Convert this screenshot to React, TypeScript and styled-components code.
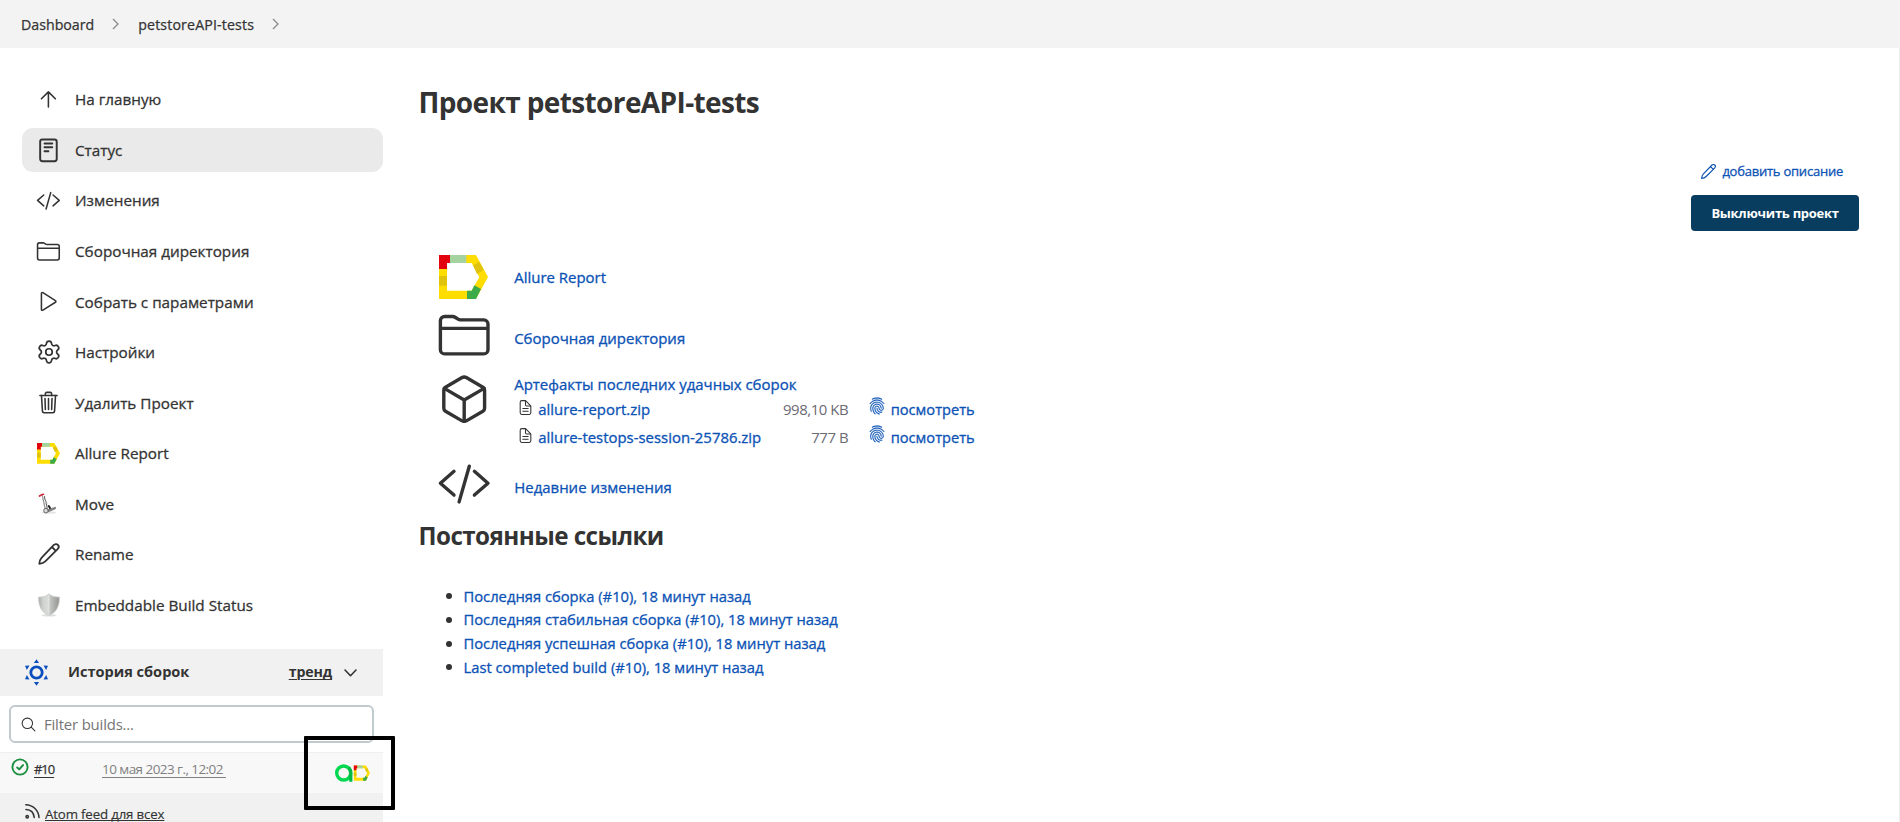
import React from 'react';
import styled, { createGlobalStyle } from 'styled-components';
import { Settings } from 'lucide-react';
import {
  IoTrashOutline,
  IoFingerPrintOutline,
  IoDocumentTextOutline,
  IoSearchOutline,
} from 'react-icons/io5';

const INK = '#333333';
const LINK = '#0b52b5';

const GlobalStyle = createGlobalStyle`
  * { box-sizing: border-box; }
  body {
    margin: 0;
    background: #fff;
    color: ${INK};
    font-family: "Open Sans", "Noto Sans", sans-serif;
  }
  svg { display: block; flex: none; overflow: visible; }
  a { color: inherit; text-decoration: none; white-space: nowrap; }
`;

const Page = styled.div`
  height: 822px;
  overflow: hidden;
  display: flex;
  flex-direction: column;
`;

const Breadcrumbs = styled.nav`
  height: 48px;
  flex: none;
  display: flex;
  align-items: center;
  padding-left: 21px;
  background: #f3f3f3;
  font-size: 14.2px;
  -webkit-text-stroke: 0.25px ${INK};
`;

const Crumb = styled.a<{ $track?: number }>`
  letter-spacing: ${(p) => p.$track ?? 0}px;
  padding-top: 1px;
`;

const CrumbArrow = styled.svg`
  width: 7px;
  height: 12px;
  margin: 0 19px 0 18px;
  stroke: #8a8a8a;
  fill: none;
`;

const Columns = styled.div`
  flex: 1;
  min-height: 0;
  display: flex;
`;

const Sidebar = styled.aside`
  position: relative;
  width: 383px;
  flex: none;
`;

const Tasks = styled.ul`
  list-style: none;
  margin: 0;
  padding: 29.4px 0 0 22px;
  display: flex;
  flex-direction: column;
  gap: 6.55px;
`;

const Task = styled.li<{ $active?: boolean }>`
  height: 44px;
  display: flex;
  align-items: center;
  gap: 14px;
  padding-left: 14px;
  border-radius: 11px;
  background: ${(p) => (p.$active ? '#eaeaea' : 'transparent')};
  font-size: 15.28px;
  line-height: 20px;
  -webkit-text-stroke: 0.28px ${INK};
`;

const TaskIcon = styled.span`
  width: 25px;
  height: 25px;
  display: flex;
  align-items: center;
  justify-content: center;
`;

const History = styled.section`
  margin-top: 22.6px;
`;

const HistoryHead = styled.header`
  height: 47px;
  display: flex;
  align-items: center;
  padding: 0 26px 0 23px;
  background: #f1f1f1;
  font-weight: 700;
`;

const HistoryTitle = styled.span`
  flex: 1;
  margin-left: 18px;
  font-size: 14.55px;
  padding-bottom: 3px;
`;

const TrendLink = styled.a`
  margin-right: 12px;
  padding-bottom: 2px;
  font-size: 14.2px;
  letter-spacing: -0.15px;
  text-decoration: underline;
  text-underline-offset: 2px;
  text-decoration-thickness: 1px;
`;

const FilterBox = styled.div`
  height: 38px;
  margin: 9px 9px;
  display: flex;
  align-items: center;
  gap: 7px;
  padding-left: 9px;
  border: 2px solid #c0cacf;
  border-radius: 6px;
  background: #fff;
  color: #757575;
  font-size: 14.9px;
  letter-spacing: -0.17px;
  svg { color: ${INK}; }
`;

const BuildRow = styled.div`
  height: 41px;
  display: flex;
  align-items: flex-start;
  padding: 6px 13px 0 11px;
  border-top: 1px solid #efefef;
  background: #f8f8f8;
`;

const BuildNumber = styled.a`
  width: 68px;
  margin-left: 5px;
  font-size: 13px;
  line-height: 20px;
  letter-spacing: -1.05px;
  text-decoration: underline;
  text-underline-offset: 3px;
  -webkit-text-stroke: 0.25px ${INK};
`;

const BuildDate = styled.a`
  flex: 1;
  white-space: pre;
  color: #808080;
  font-size: 13.5px;
  line-height: 20px;
  letter-spacing: -0.55px;
  text-decoration: underline;
  text-underline-offset: 3px;
`;

const TestOpsSlot = styled.span`
  padding-top: 5px;
`;

const FeedRow = styled.div`
  height: 30px;
  display: flex;
  gap: 4px;
  padding: 11px 0 0 24px;
  background: #f1f1f1;
  font-size: 13.3px;
  line-height: 18px;
  letter-spacing: -0.17px;
  -webkit-text-stroke: 0.15px ${INK};
`;

const FeedLink = styled.a`
  height: 18px;
  padding-top: 1px;
  text-decoration: underline;
  text-decoration-thickness: 1px;
  text-underline-offset: 1px;
  text-decoration-skip-ink: none;
`;

const Highlight = styled.div`
  position: absolute;
  left: 304px;
  top: 688px;
  width: 91px;
  height: 74px;
  border: 4px solid #000;
  border-radius: 1px;
`;

const Main = styled.main`
  flex: 1;
  padding: 34px 40px 0 35.5px;
  border-right: 1px solid #eeeeee;
`;

const Title = styled.h1`
  margin: 0;
  font-size: 28px;
  line-height: 40px;
  letter-spacing: -0.62px;
`;

const Actions = styled.div`
  height: 125px;
  padding-top: 37px;
  display: flex;
  flex-direction: column;
  align-items: flex-end;
`;

const DescriptionLink = styled.a`
  height: 24px;
  margin-right: 16px;
  display: flex;
  align-items: center;
  gap: 5px;
  color: ${LINK};
  font-size: 13px;
  letter-spacing: -0.23px;
  -webkit-text-stroke: 0.28px ${LINK};
`;

const DisableButton = styled.button`
  width: 168px;
  height: 36px;
  margin-top: 12px;
  padding: 0;
  border: 0;
  border-radius: 4px;
  background: #083d5f;
  color: #fff;
  font: 700 13px "Open Sans", sans-serif;
  letter-spacing: -0.28px;
`;

const Summary = styled.div`
  padding-left: 17.7px;
`;

const SummaryRow = styled.div<{ $height: number; $top?: boolean }>`
  height: ${(p) => p.$height}px;
  display: flex;
  align-items: ${(p) => (p.$top ? 'flex-start' : 'center')};
  gap: 22px;
`;

const SummaryIcon = styled.span<{ $drop?: number; $shift?: number }>`
  width: 56px;
  display: flex;
  justify-content: center;
  padding: ${(p) => p.$drop ?? 0}px ${(p) => p.$shift ?? 0}px 0 0;
`;

const SummaryLink = styled.a<{ $drop?: number }>`
  padding-top: ${(p) => p.$drop ?? 0}px;
  color: ${LINK};
  font-size: 14.97px;
  line-height: 22px;
  -webkit-text-stroke: 0.3px ${LINK};
`;

const Artifacts = styled.div`
  display: flex;
  flex-direction: column;
  padding-top: 9px;
`;

const ArtifactRow = styled.div`
  height: 28px;
  display: grid;
  grid-template-columns: 24px 214px 96px 42.5px auto;
  align-items: center;
  font-size: 14.92px;
  color: ${LINK};
  -webkit-text-stroke: 0.3px ${LINK};
`;

const FileIcon = styled.span`
  padding: 0 0 4px 3px;
  color: ${INK};
`;

const PrintIcon = styled.span`
  padding: 0 0 7px 20px;
  svg { stroke: ${LINK}; stroke-width: 6; }
`;

const FileSize = styled.span`
  color: #6b6b73;
  letter-spacing: -0.43px;
  text-align: right;
  -webkit-text-stroke: 0;
`;

const ViewLink = styled.a`
  font-size: 14.65px;
`;

const Subtitle = styled.h2`
  margin: 7px 0 31.5px;
  font-size: 24.2px;
  line-height: 34px;
  letter-spacing: -0.56px;
`;

const Permalinks = styled.ul`
  list-style: none;
  margin: 0;
  padding-left: 27px;
  font-size: 14.75px;
  line-height: 23.7px;
`;

const PermalinkRow = styled.li`
  display: flex;
  align-items: center;
  gap: 12px;
  &::before {
    content: "";
    width: 6px;
    height: 6px;
    border-radius: 50%;
    background: ${INK};
  }
`;

const Permalink = styled.a`
  color: ${LINK};
  -webkit-text-stroke: 0.3px ${LINK};
`;

type IconProps = { size?: number; weight?: number };

const OutlineIcon = ({ size = 24.8, weight = 32, children }: IconProps & { children: React.ReactNode }) => (
  <svg width={size} height={size} viewBox="0 0 512 512" fill="none" stroke="currentColor"
    strokeWidth={weight} strokeLinecap="round" strokeLinejoin="round">
    {children}
  </svg>
);

const ArrowUp = () => (
  <OutlineIcon><path d="M112 244l144-144 144 144M256 120v292" /></OutlineIcon>
);

const StatusIcon = () => (
  <OutlineIcon weight={40}>
    <rect x="86" y="32" width="342" height="448" rx="44" />
    <path d="M176 112h160M176 192h160M176 272h80" />
  </OutlineIcon>
);

const CodeIcon = (p: IconProps) => (
  <OutlineIcon {...p}>
    <path d="M160 368L32 256l128-112M352 368l128-112-128-112M304 96l-96 336" />
  </OutlineIcon>
);

const FolderIcon = (p: IconProps) => (
  <OutlineIcon {...p}>
    <path d="M440 432H72a40 40 0 01-40-40V120a40 40 0 0140-40h75.89a40 40 0 0122.19 6.72l27.84 18.56a40 40 0 0022.19 6.72H440a40 40 0 0140 40v240a40 40 0 01-40 40zM32 192h448" />
  </OutlineIcon>
);

const PlayIcon = () => (
  <OutlineIcon>
    <path d="M112 91v330c0 17 17 22 31 14l258-162c12-7 12-27 0-34L143 76c-14-8-31-2-31 15z" />
  </OutlineIcon>
);

const CubeIcon = (p: IconProps) => (
  <OutlineIcon {...p}>
    <path d="M448 341.37V170.61A32 32 0 00432.11 143l-152-88.46a47.94 47.94 0 00-48.24 0L79.89 143A32 32 0 0064 170.61v170.76A32 32 0 0079.89 369l152 88.46a48 48 0 0048.24 0l152-88.46A32 32 0 00448 341.37z" />
    <path d="M69 153.99l187 110 187-110M256 463.99v-200" />
  </OutlineIcon>
);

const PencilIcon = ({ size = 24, weight = 1.8 }: IconProps) => (
  <svg width={size} height={size} viewBox="0 0 24 24" fill="none" stroke="currentColor"
    strokeWidth={weight} strokeLinecap="round" strokeLinejoin="round">
    <path d="M2.3 21.8c.2-2.4.8-4.6 2.2-6L16.6 3.2c1.3-1.3 3.2-1.5 4.3-.4s1 3-.3 4.3L8.3 19.4c-1.5 1.5-3.6 2.2-6 2.4zM14.9 5l3.9 3.9" />
  </svg>
);

const AllureShape = () => (
  <>
    <path fill="#ffdd00" fillRule="evenodd" d="M0 0H111L147 66L111 132H0zM24 24V107H98L121 66L98 24z" />
    <path fill="#e3000f" d="M0 0H33V24H24V42H0z" />
    <path fill="#a5d3a0" d="M33 0H82V24H33z" />
    <path fill="#dfc30c" d="M0 63H24V92H0zM102 31L121 20L134 44L114 57z" />
    <path fill="#3dab49" d="M84 107H98L106 91L126 102L111 132H84z" />
  </>
);

const AllureIcon = ({ size = 49 }: IconProps) => (
  <svg width={size} height={(size * 132) / 147} viewBox="0 0 147 132"><AllureShape /></svg>
);

const MoveIcon = () => (
  <svg width="24" height="24" viewBox="0 0 24 24" fill="none" strokeLinecap="round">
    <ellipse cx="12" cy="20.5" rx="7.5" ry="1.3" fill="#e6e6e6" />
    <path d="M10.5 17.8l8-2.6v1.5l-7 3z" fill="#888" stroke="#777" strokeWidth=".8" />
    <path d="M5.3 3.5L8.2 17" stroke="#999" strokeWidth="1.2" />
    <path d="M7.5 4.5c-.5 3 1.6 4 1.9 7l.8 5" stroke="#555" strokeWidth="1" />
    <path d="M6 7.5l2.5-.5M7 12l3-.5" stroke="#aaa" strokeWidth=".9" />
    <path d="M2.5 4l2.2-1.2L6.5 2.3" stroke="#cf2b3a" strokeWidth="1.7" />
    <path d="M11.8 14l1.2 2" stroke="#222" strokeWidth="2" />
    <circle cx="9" cy="18.7" r="2.3" fill="#ddd" stroke="#666" strokeWidth="1" />
  </svg>
);

const ShieldIcon = () => (
  <svg width="24" height="24" viewBox="0 0 24 24">
    <defs>
      <linearGradient id="shield" x1="0" x2="1" y1="0" y2="0">
        <stop offset="0" stopColor="#a9aba8" />
        <stop offset=".2" stopColor="#cfd1ce" />
        <stop offset=".48" stopColor="#dcdedb" />
        <stop offset=".55" stopColor="#c3c5c2" />
        <stop offset="1" stopColor="#92948f" />
      </linearGradient>
    </defs>
    <ellipse cx="12" cy="22.3" rx="7.5" ry="1.3" fill="#dedede" />
    <path d="M12 .8c2.5 2.4 6 3.6 10.3 3.2.5 8-2.5 15.5-10.3 18.5C4.2 19.5 1.2 12 1.7 4 6 4.4 9.5 3.2 12 .8z"
      fill="url(#shield)" stroke="#c9cbc8" strokeWidth=".8" />
    <path d="M12 3.5v16" stroke="#eceeeb" strokeWidth=".9" strokeDasharray="1.2 1.2" />
  </svg>
);

const SunIcon = () => (
  <svg width="27" height="27" viewBox="-13.5 -13.5 27 27" fill="#0b4fbf">
    <circle r="5.7" fill="none" stroke="#0b4fbf" strokeWidth="2.8" />
    {[0, 60, 120, 180, 240, 300].map((deg) => (
      <path key={deg} d="M0-13.3L2.6-9.6H-2.6z" transform={`rotate(${deg})`} />
    ))}
  </svg>
);

const ChevronDown = () => (
  <svg width="13" height="8" viewBox="0 0 13 8" fill="none" stroke={INK} strokeWidth="1.6"
    strokeLinecap="round" strokeLinejoin="round">
    <path d="M1 1l5.5 5.7L12 1" />
  </svg>
);

const SuccessIcon = () => (
  <svg width="18" height="18" viewBox="0 0 18 18" fill="none" stroke="#1e8f41" strokeLinecap="round" strokeLinejoin="round">
    <circle cx="9" cy="8" r="7.6" strokeWidth="1.9" />
    <path d="M6.2 8.500l2 1.900 3.800-4.300" strokeWidth="2" />
  </svg>
);

const TestOpsIcon = () => (
  <svg width="35" height="19" viewBox="0 0 35 19">
    <circle cx="8.7" cy="9" r="7" fill="none" stroke="#00d84f" strokeWidth="3.4" />
    <path d="M13.8 3.5c1.5 1.8 2 3.5 2 6v8.3" fill="none" stroke="#00b944" strokeWidth="3.2" />
    <g transform="translate(18.8 1.5) scale(.11 .115)"><AllureShape /></g>
  </svg>
);

const FeedIcon = () => (
  <svg width="17" height="17" viewBox="0 0 17 17" fill="none" stroke={INK} strokeWidth="1.5" strokeLinecap="round">
    <circle cx="3.2" cy="12.8" r="1.2" />
    <path d="M2 5.5c4.6.2 7.8 3.3 8.2 8M1.8.8C9.2 1.2 14.5 6.2 15 13.5" />
  </svg>
);

const tasks: { label: string; icon: React.ReactNode; active?: boolean }[] = [
  { label: 'На главную', icon: <ArrowUp /> },
  { label: 'Статус', icon: <StatusIcon />, active: true },
  { label: 'Изменения', icon: <CodeIcon /> },
  { label: 'Сборочная директория', icon: <FolderIcon /> },
  { label: 'Собрать с параметрами', icon: <PlayIcon /> },
  { label: 'Настройки', icon: <Settings size={26} strokeWidth={1.6} /> },
  { label: 'Удалить Проект', icon: <IoTrashOutline size={25} /> },
  { label: 'Allure Report', icon: <AllureIcon size={23} /> },
  { label: 'Move', icon: <MoveIcon /> },
  { label: 'Rename', icon: <PencilIcon /> },
  { label: 'Embeddable Build Status', icon: <ShieldIcon /> },
];

const artifacts = [
  { name: 'allure-report.zip', size: '998,10 KB' },
  { name: 'allure-testops-session-25786.zip', size: '777 B' },
];

const permalinks = [
  'Последняя сборка (#10), 18 минут назад',
  'Последняя стабильная сборка (#10), 18 минут назад',
  'Последняя успешная сборка (#10), 18 минут назад',
  'Last completed build (#10), 18 минут назад',
];

const Separator = () => (
  <CrumbArrow viewBox="0 0 7 12"><path d="M1 1l5 5-5 5" strokeWidth="1.3" /></CrumbArrow>
);

export default function App() {
  return (
    <Page>
      <GlobalStyle />
      <Breadcrumbs>
        <Crumb>Dashboard</Crumb>
        <Separator />
        <Crumb $track={0.14}>petstoreAPI-tests</Crumb>
        <Separator />
      </Breadcrumbs>
      <Columns>
        <Sidebar>
          <Tasks>
            {tasks.map((t) => (
              <Task key={t.label} $active={t.active}>
                <TaskIcon>{t.icon}</TaskIcon>
                {t.label}
              </Task>
            ))}
          </Tasks>
          <History>
            <HistoryHead>
              <SunIcon />
              <HistoryTitle>История сборок</HistoryTitle>
              <TrendLink>тренд</TrendLink>
              <ChevronDown />
            </HistoryHead>
            <FilterBox>
              <IoSearchOutline size={17} />
              Filter builds...
            </FilterBox>
            <BuildRow>
              <SuccessIcon />
              <BuildNumber>#10</BuildNumber>
              <BuildDate>{'10 мая 2023 г., 12:02 '}</BuildDate>
              <TestOpsSlot><TestOpsIcon /></TestOpsSlot>
            </BuildRow>
            <FeedRow>
              <FeedIcon />
              <FeedLink>Atom feed для всех</FeedLink>
            </FeedRow>
          </History>
          <Highlight />
        </Sidebar>
        <Main>
          <Title>Проект petstoreAPI-tests</Title>
          <Actions>
            <DescriptionLink>
              <PencilIcon size={17} weight={1.6} />
              добавить описание
            </DescriptionLink>
            <DisableButton>Выключить проект</DisableButton>
          </Actions>
          <Summary>
            <SummaryRow $height={59}>
              <SummaryIcon $shift={1}><AllureIcon /></SummaryIcon>
              <SummaryLink>Allure Report</SummaryLink>
            </SummaryRow>
            <SummaryRow $height={58}>
              <SummaryIcon><FolderIcon size={54.4} /></SummaryIcon>
              <SummaryLink $drop={6}>Сборочная директория</SummaryLink>
            </SummaryRow>
            <SummaryRow $height={91} $top>
              <SummaryIcon $drop={8}><CubeIcon size={54.4} /></SummaryIcon>
              <Artifacts>
                <SummaryLink>Артефакты последних удачных сборок</SummaryLink>
                {artifacts.map((a) => (
                  <ArtifactRow key={a.name}>
                    <FileIcon><IoDocumentTextOutline size={17} /></FileIcon>
                    <a>{a.name}</a>
                    <FileSize>{a.size}</FileSize>
                    <PrintIcon><IoFingerPrintOutline size={18} /></PrintIcon>
                    <ViewLink>посмотреть</ViewLink>
                  </ArtifactRow>
                ))}
              </Artifacts>
            </SummaryRow>
            <SummaryRow $height={57}>
              <SummaryIcon><CodeIcon size={54.4} /></SummaryIcon>
              <SummaryLink $drop={6}>Недавние изменения</SummaryLink>
            </SummaryRow>
          </Summary>
          <Subtitle>Постоянные ссылки</Subtitle>
          <Permalinks>
            {permalinks.map((text) => (
              <PermalinkRow key={text}><Permalink>{text}</Permalink></PermalinkRow>
            ))}
          </Permalinks>
        </Main>
      </Columns>
    </Page>
  );
}
